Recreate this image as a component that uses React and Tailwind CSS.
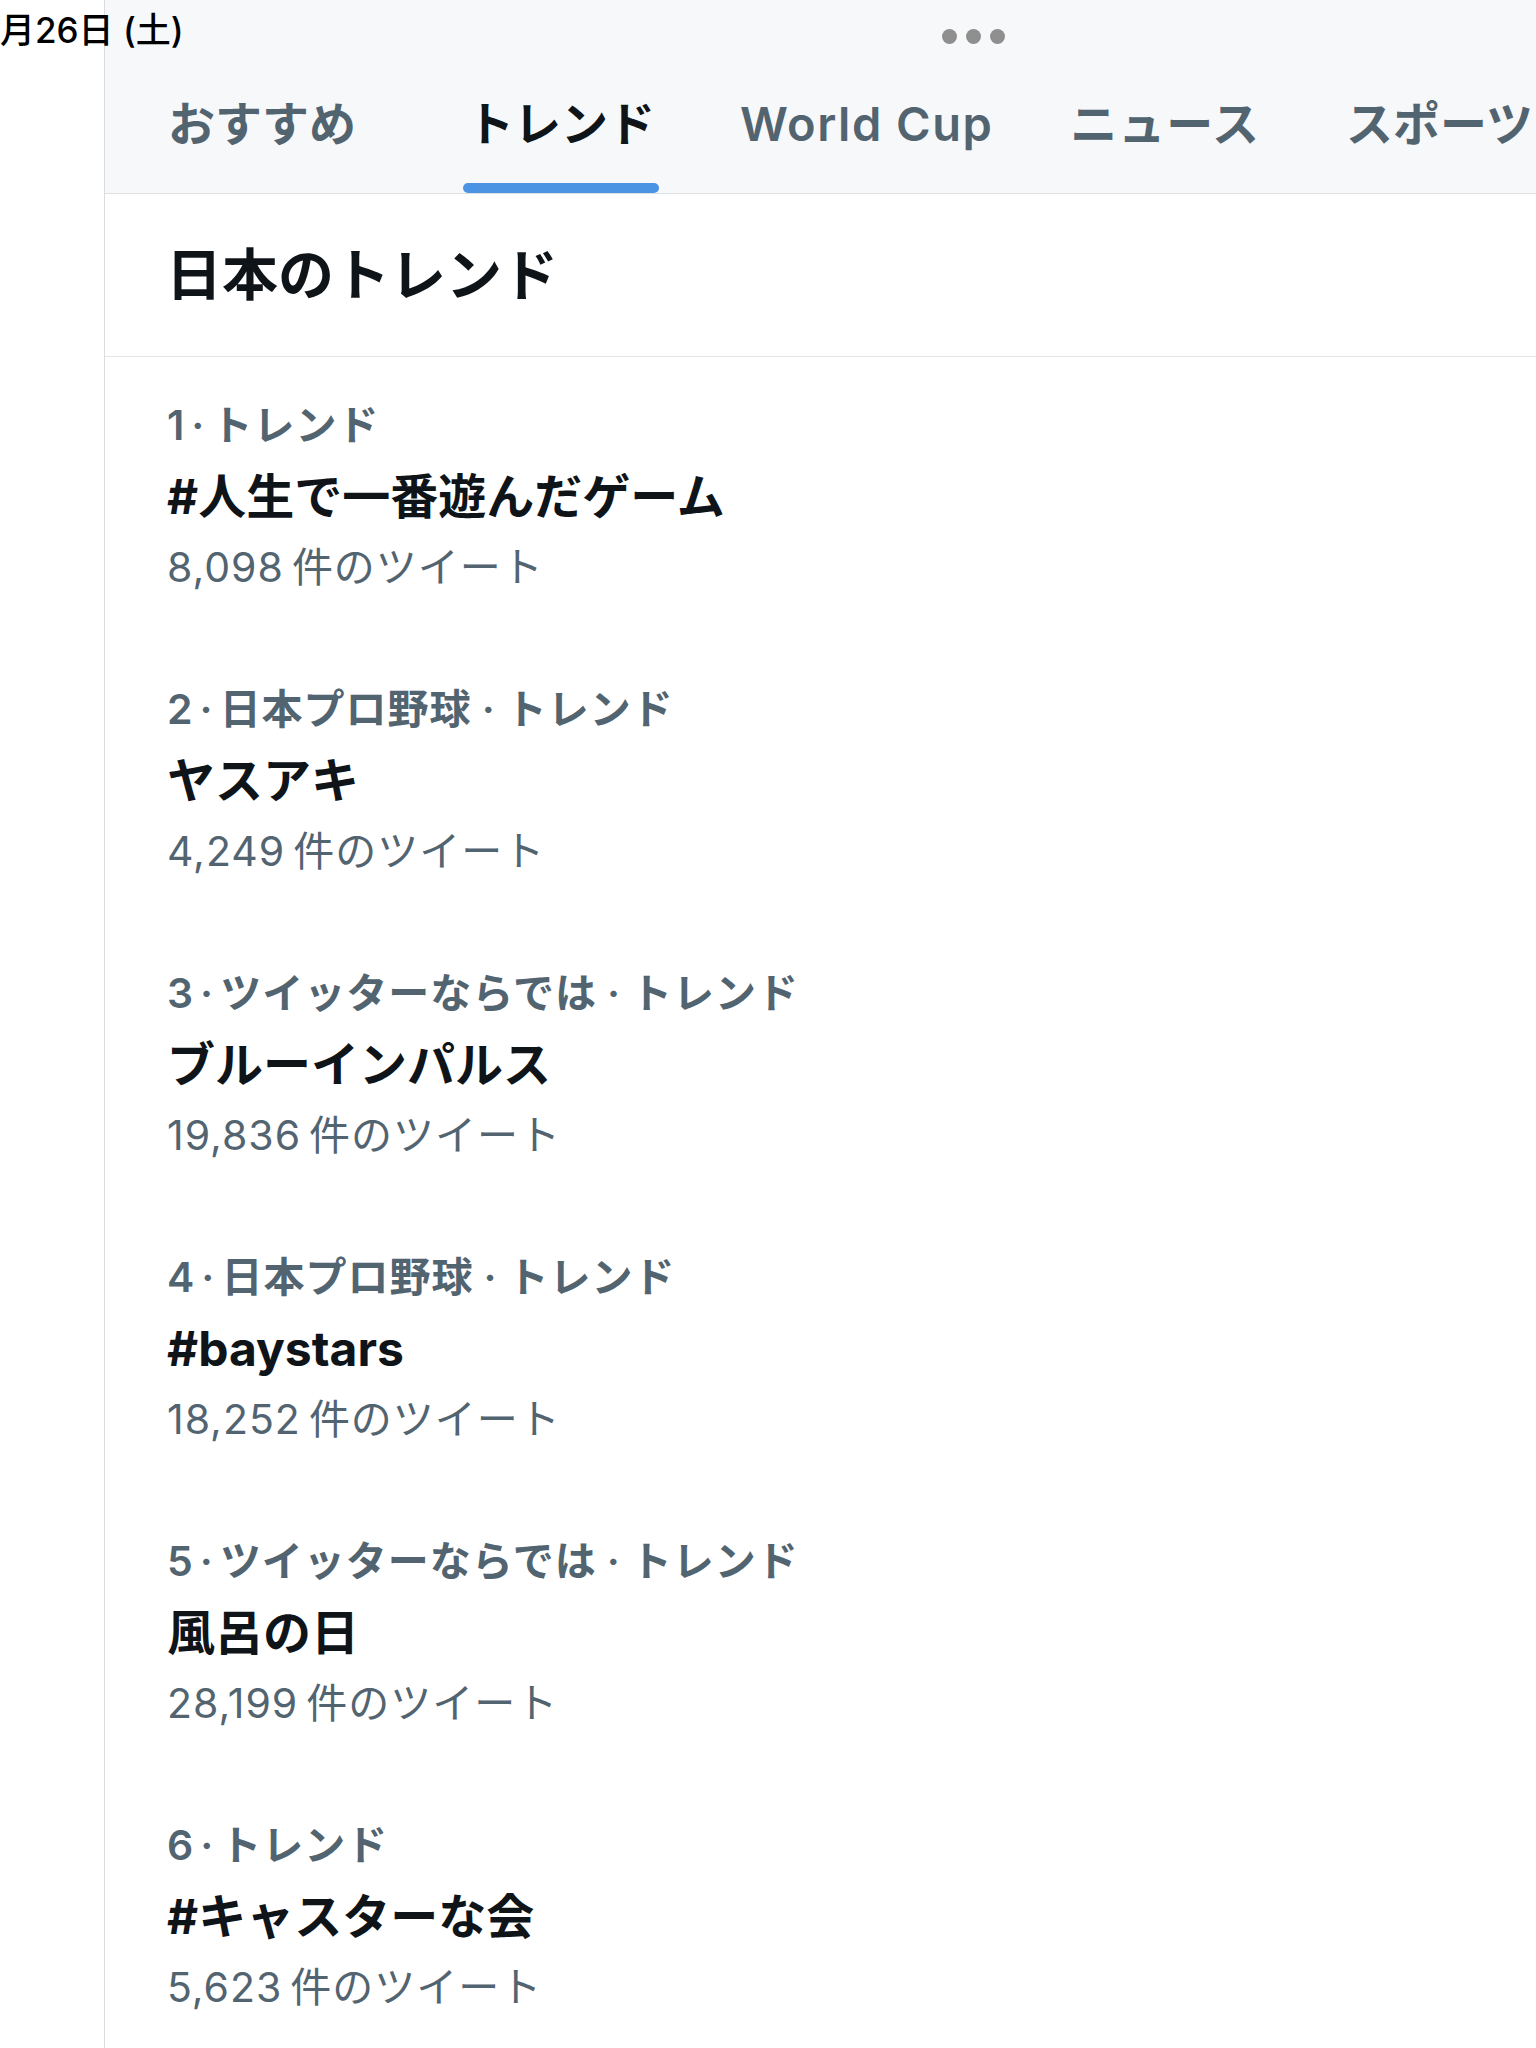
import React from 'react'

const tabs = [
  { label: 'おすすめ', cls: 'ml-[59px]', active: false },
  { label: 'トレンド', cls: 'ml-[103px]', active: true },
  { label: 'World Cup', cls: 'ml-[77px] tracking-[1.5px]', active: false },
  { label: 'ニュース', cls: 'ml-[69px] tracking-[1px]', active: false },
  { label: 'スポーツ', cls: 'ml-[78px]', active: false },
]

const trends = [
  { rank: 1, tags: ['トレンド'], title: '#人生で一番遊んだゲーム', count: '8,098' },
  { rank: 2, tags: ['日本プロ野球', 'トレンド'], title: 'ヤスアキ', count: '4,249' },
  { rank: 3, tags: ['ツイッターならでは', 'トレンド'], title: 'ブルーインパルス', count: '19,836' },
  { rank: 4, tags: ['日本プロ野球', 'トレンド'], title: '#baystars', count: '18,252' },
  { rank: 5, tags: ['ツイッターならでは', 'トレンド'], title: '風呂の日', count: '28,199' },
  { rank: 6, tags: ['トレンド'], title: '#キャスターな会', count: '5,623' },
]

const font = "font-['Inter','Noto_Sans_CJK_JP',sans-serif]"

function TrendItem({ item }) {
  return (
    <div className="pl-[62px] pt-[33px] pb-[38px]">
      <div className="text-[41px] leading-[71px] font-semibold tracking-[1px] text-[#536471] whitespace-nowrap">
        {item.rank}
        <span className="mx-[6px]">·</span>
        {item.tags.map((tag, i) => (
          <span key={tag}>
            {i > 0 && <span className="mx-[10px]">·</span>}
            {tag}
          </span>
        ))}
      </div>
      <div className="text-[48px] leading-[71px] font-bold text-[#0f1419] whitespace-nowrap">
        {item.title}
      </div>
      <div className="text-[41px] leading-[71px] tracking-[1px] text-[#536471] whitespace-nowrap">
        <span className="mr-[8px]">{item.count}</span>件のツイート
      </div>
    </div>
  )
}

export default function App() {
  return (
    <div className={`relative w-[1536px] h-[2048px] overflow-hidden bg-white flex ${font}`}>
      {/* left rail */}
      <div className="w-[105px] shrink-0 border-r border-[#dadcde] bg-white" />

      {/* main column */}
      <div className="flex-1 min-w-0">
        <div className="h-[194px] bg-[#f7f8f9] border-b border-[#dde1e4] flex items-end overflow-hidden">
          {tabs.map((t) => (
            <div key={t.label} className={`${t.cls} shrink-0 flex flex-col items-stretch`}>
              <span
                className={`px-[4px] text-[47px] leading-[60px] whitespace-nowrap ${
                  t.active ? 'font-bold text-[#0f1419]' : 'font-semibold text-[#536471]'
                }`}
              >
                {t.label}
              </span>
              <div
                className={`mt-[29px] h-[10px] rounded-full ${
                  t.active ? 'bg-[#4b94e4]' : 'bg-transparent'
                }`}
              />
            </div>
          ))}
        </div>

        <div className="h-[163px] border-b border-[#e3e6e8] flex items-center pl-[61px]">
          <h2 className="text-[56px] font-bold text-[#0f1419] leading-none">日本のトレンド</h2>
        </div>

        <div>
          {trends.map((item) => (
            <TrendItem key={item.rank} item={item} />
          ))}
        </div>
      </div>

      {/* status bar overlay */}
      <div className="absolute top-[9px] left-0 text-[35px] leading-[42px] font-medium text-black whitespace-nowrap">
        月26日 (土)
      </div>
      <div className="absolute top-[29px] left-[942px] flex gap-[9px]">
        <span className="w-[15px] h-[15px] rounded-full bg-[#8f8f8f]" />
        <span className="w-[15px] h-[15px] rounded-full bg-[#8f8f8f]" />
        <span className="w-[15px] h-[15px] rounded-full bg-[#8f8f8f]" />
      </div>
    </div>
  )
}
